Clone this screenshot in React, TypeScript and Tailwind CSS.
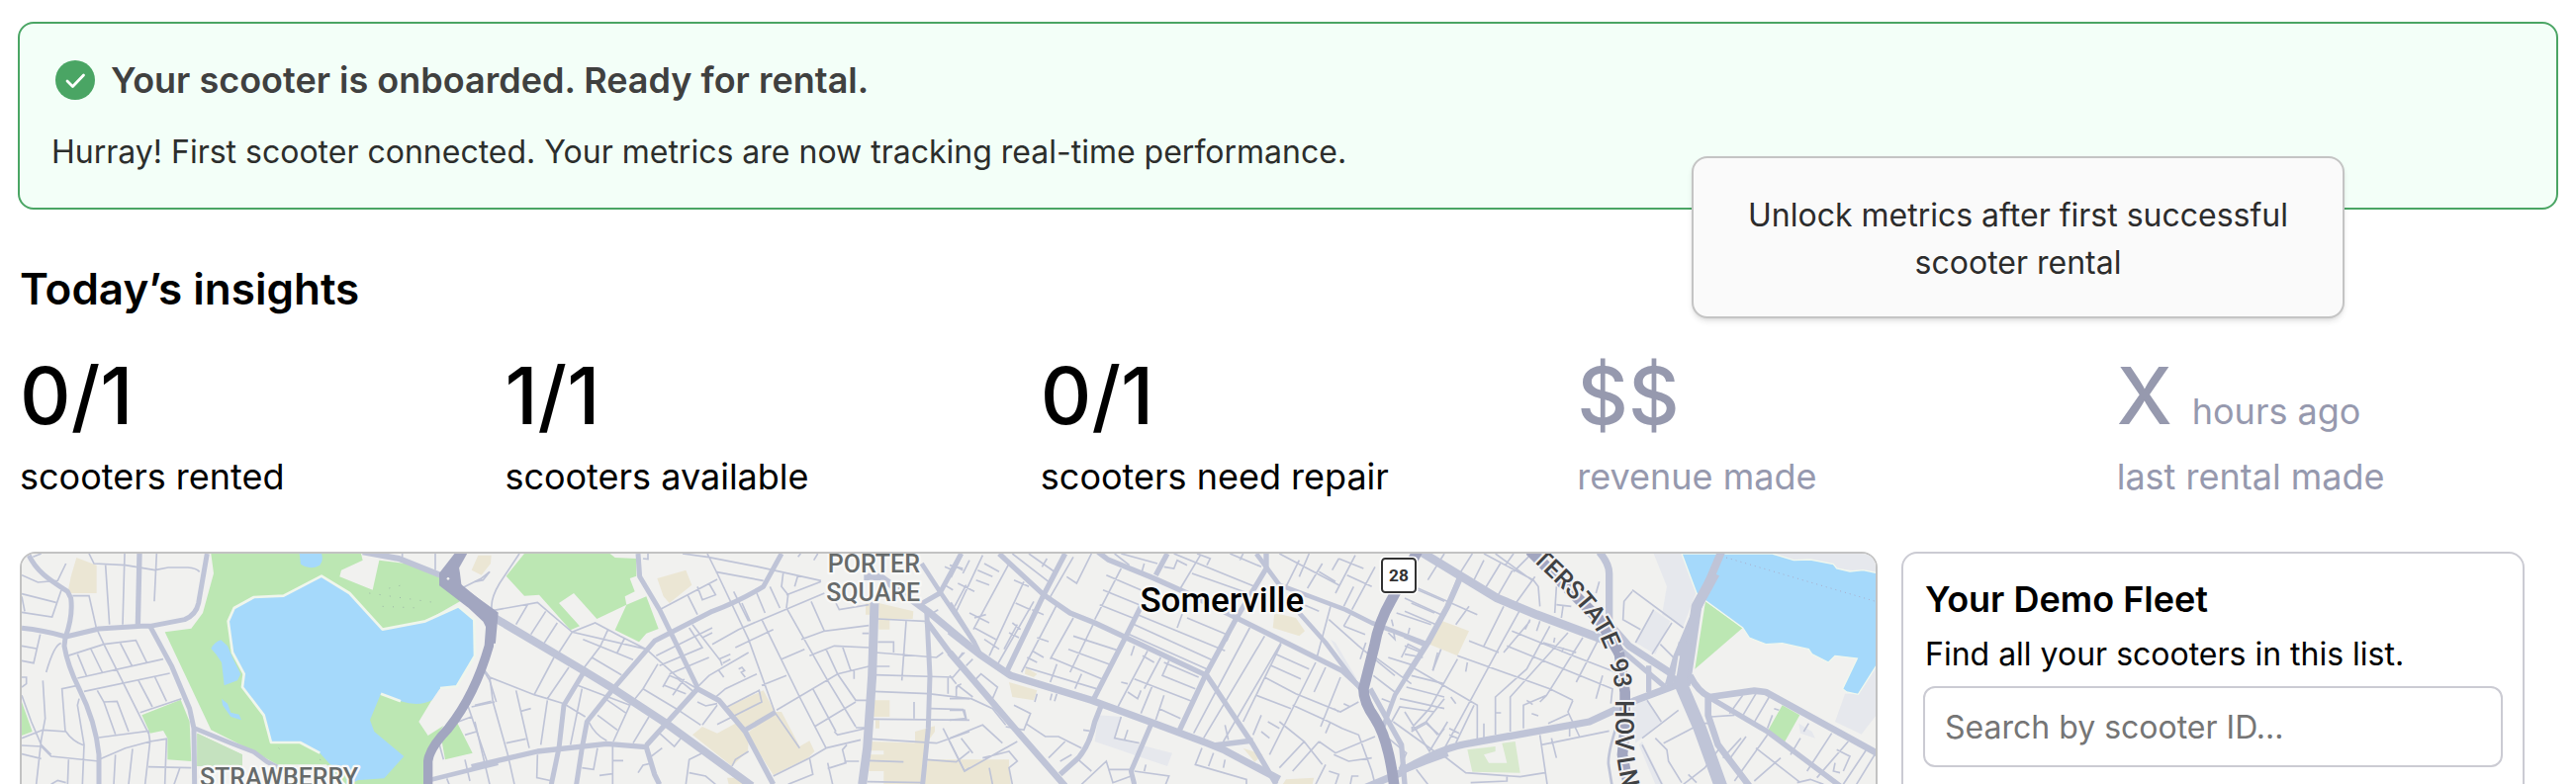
import React from 'react';

interface Metric {
    value: string;
    suffix?: string;
    label: string;
    locked?: boolean;
}

const metrics: Metric[] = [
    { value: '0/1', label: 'scooters rented' },
    { value: '1/1', label: 'scooters available' },
    { value: '0/1', label: 'scooters need repair' },
    { value: '$$', label: 'revenue made', locked: true },
    { value: 'X', suffix: 'hours ago', label: 'last rental made', locked: true },
];

interface Tile {
    x: number;
    park?: string;
    industrial?: string;
    school?: string;
    water?: string;
    streets: string;
    roads: [number, string][];
    highways?: [number, string][];
}

// The map is drawn as four neighbouring tiles, each with its own x origin.
const tiles: Tile[] = [
    {
        x: 0,
        park: 'M640 30H1095L1100 50L1035 80L1030 100L1130 140L1150 50L1230 60L1340 105L1395 175L1290 235L1160 260L1240 320L1385 433L1330 440L1270 540L1298 582L1345 552L1300 620L1285 730H1050L990 670H840L770 630L640 565L500 268L580 257L615 210L648 90Z M66 480L98 570L66 582Z M430 520L548 473L575 540L580 660L508 655V590L495 567L455 575Z M598 575L735 640V675H598Z M1340 600L1385 540L1433 635L1350 655Z',
        school: 'M232 42L293 65V150H205L215 100Z M1430 80L1450 35H1490L1488 60L1460 95Z',
        streets:
            'M66 95L115 117L175 112L200 60 M66 152L170 178 M270 30L285 60L380 65L470 80L510 72H570Q595 74 605 85 M320 65L332 245 M378 30L372 245 M475 30L468 175 M220 158H270L292 255L315 305L450 575 M186 140L158 222L66 208 M66 160L75 205 M205 340L315 305L412 293L445 360 M235 408L495 350 M255 448L515 393 M235 335L262 400 M275 318L310 390 M365 302L400 370 M420 415L462 495 M470 405L505 478 M425 512L550 470 M66 310L110 318 M66 355L102 362L122 275 M185 302Q165 305 140 390 M130 415L137 530L125 595L120 640L110 730 M66 460L95 540L125 610L155 640 M66 590L130 565L200 570Q220 600 255 612 M235 430L188 440L198 570 M240 470L235 490L255 610L250 730 M66 612L125 615L155 645L300 660 M66 638L125 652 M295 445L315 480L350 578 M315 480L355 478L390 570 M300 588L450 568L455 600 M300 655L380 620L455 600L505 592L500 730 M350 640L345 730 M402 622L390 730 M455 600L440 730 M450 677L580 680 M545 682L528 730 M208 655L205 730 M155 730L175 718L200 725 M66 405H80V425L66 435 M1400 135L1460 105L1485 85 M1470 390L1485 415L1505 480 M1430 495L1500 480 M1390 540L1430 525 M1410 580L1445 570 M1415 480L1480 670 M1330 600L1345 655 M1220 30V45 M1320 30V80 M1355 712L1362 730 M1410 655L1425 720 M100 40L125 30',
        roads: [
            [15, 'M85 30C110 85 150 110 205 145L215 165Q222 220 198 285L195 310Q205 370 240 440Q290 540 300 640V730'],
            [15, 'M66 256Q130 262 200 282L300 258L430 250H455L560 230Q595 215 602 180L628 30'],
            [16, 'M423 30L418 250'],
            [15, 'M455 250L520 370L575 500L588 560L590 730'],
            [14, 'M590 560L700 605L770 632L810 662L845 680'],
            [14, 'M1300 718L1510 665'],
            [18, 'M1100 25L1210 45L1360 105'],
        ],
        highways: [
            [30, 'M1405 20L1360 100'],
            [26, 'M1350 100L1490 215'],
            [28, 'M1490 215L1483 310Q1440 460 1360 560Q1302 620 1298 660V740'],
            [6, 'M1382 30L1335 90V125L1420 190L1468 235L1500 300L1508 210L1397 130L1392 90Z'],
        ],
    },
    {
        x: 1440,
        park: 'M150 30H410L425 42L490 45V98L470 105L485 145L455 160L460 185L370 228L300 150L255 180L318 250L290 262L195 155L150 158L95 98Z M460 185L520 160L557 258L520 272L498 298L425 262Z',
        school: 'M553 105L640 80L658 125L590 180L572 160Z M765 495L875 445L910 510L815 560Z M825 575L910 510H930L985 615L1015 598L1030 630L1010 650L905 702Z M660 580L690 555L735 575L800 540L830 600L828 628L780 675Z M1225 180L1330 205L1328 228H1258V260H1225Z M1185 180H1200V215H1185Z M1210 475H1258V525H1205Z M1195 600L1370 605L1358 730H1240V690H1195L1200 640H1240V628H1195Z M1375 655H1620V730H1358Z M1335 570L1395 553V570L1370 605H1335Z M765 710H800L830 730H770Z M1215 535H1227V560H1215Z',
        streets:
            'M0 115L25 110L45 85 M135 30L75 120Q45 170 52 203L190 178L295 268L520 320 M520 320L615 405L675 440 M160 185L125 245 M215 205L170 275 M250 240L208 305 M295 268L255 330 M295 268L365 240L440 280L520 320 M403 262L380 312L328 380 M328 290L480 352 M355 345L445 398 M455 285L432 330 M240 345L180 458L45 405L30 385 M285 375L220 470 M180 458L270 485L335 525 M45 405L55 480L100 640L120 730 M125 445L165 620 M0 490L50 478 M140 508L170 500 M0 540L45 730 M95 605L155 592 M220 475L200 610 M325 440L290 610 M312 430L470 490 M395 470L460 515 M372 520L432 565 M345 540Q365 580 400 598 M420 600L470 490L510 440L555 365 M528 525L480 605 M510 440L610 500L685 550 M570 435L590 400L615 410L665 450 M600 460L635 410 M575 430L640 455 M560 575L605 615L625 590 M190 640L188 710L235 720 M372 620L360 685L325 680 M418 615V730 M418 658H450 M378 703L418 698 M495 695L510 672L540 665 M535 645L568 620 M830 630L790 655L780 675 M640 730L650 655L690 635 M650 695L700 705L730 730 M510 45L525 47V30 M630 30L705 40L860 70L1050 112 M705 30L735 90L830 290L910 512L985 620 M730 85L875 112 M735 108L645 155L560 200 M645 155L675 215 M675 130L690 170L730 155L710 120 M785 145L830 235 M810 180L835 235 M855 150L880 210 M895 130L925 195 M935 90L930 130L950 155L945 195 M980 95L970 130 M945 155L1050 115 M1060 150L870 230L800 260L720 305 M948 200L1070 415L1155 555 M870 230L985 465L1065 620 M1020 175L1060 265L1195 248 M990 290L1060 265 M1095 180L1105 200L1195 185 M1175 272H1195 M930 350L1000 320 M1015 340L1090 310L1195 315 M1065 320L1100 395 M1115 312L1140 385 M1195 372L1100 395L915 505 M1150 385V410 M1025 440L1095 570 M1100 395L1155 475H1190 M1030 555L1155 480 M1065 620L1170 595 M1090 570L1100 580L1195 558H1155 M905 705L1015 650L1065 620 M1015 650L1025 700L950 730 M1070 682L1125 665L1115 625L1128 610 M1070 665L1085 730 M1120 660H1165 M550 340L720 255 M560 370L690 315L650 255 M590 395L710 345 M660 245L745 355L750 370 M752 362L775 350 M790 315L905 260 M675 435L710 400L830 330 M740 385L755 405 M725 470L760 440L855 395 M735 548L870 480L862 445L765 495 M870 430L945 400 M690 550L735 490 M675 480L700 492L735 485 M740 350L775 335 M690 285L720 270 M800 380L810 375L818 385L808 390L820 405 M1222 228L1365 235 M1308 235L1295 415 M1222 298H1270V330 M1215 330L1400 345L1420 330 M1215 372H1258 M1212 398L1450 405L1480 370 M1210 448L1375 455L1500 470 M1435 405V455 M1460 465V435L1475 425 M1205 532L1500 535 M1332 480V530 M1380 500L1480 503L1490 535 M1200 592L1400 605L1500 570 M1195 658L1300 662 M1370 655L1460 662L1500 630 M1190 722L1360 725 M1420 560L1460 640L1485 690L1500 680 M1425 70L1450 80 M1460 70L1480 80 M1425 125L1450 140 M1405 200L1380 215 M1455 190L1490 125 M1480 330L1465 350 M980 40L988 30 M1028 50L1040 30',
        roads: [
            [24, 'M60 225L330 385L420 440L580 545L840 735'],
            [27, 'M1212 175L1205 400L1190 620L1175 730'],
            [15, 'M495 30L500 100L560 200L675 435'],
            [15, 'M930 30L875 130Q800 175 720 205L545 295L420 440L340 540L325 620L308 730'],
            [15, 'M330 390L270 490L255 620L232 730'],
            [16, 'M-10 677L190 630L400 607L520 617L545 700L560 730'],
            [16, 'M520 612L675 440L740 475L820 570L905 730'],
            [15, 'M820 565L910 512'],
            [22, 'M1180 100H1230L1380 210L1500 310'],
            [17, 'M1370 235L1440 330L1500 400'],
            [15, 'M1370 200L1380 400L1375 560L1358 730'],
            [15, 'M1340 190L1410 150L1475 30'],
            [14, 'M1355 60L1410 145L1515 300'],
        ],
    },
    {
        x: 2880,
        school: 'M985 210L1050 225L1077 265L1060 280L980 255Z M1495 235V320L1460 300Z M180 420L265 445L255 475L190 465Z M230 375L265 395L255 405L228 395Z M890 620L950 640L925 662Z M110 655L125 680L165 655L185 700V730H100Z M920 130L930 145H905Z M1020 715L1105 710L1100 730H1010Z',
        industrial: 'M450 520L520 525L500 590L675 635L660 675L440 600Z M1155 290L1170 300L1235 410L1225 415Z',
        streets:
            'M60 50L40 90 M100 35L20 205 M105 60L150 85 M85 80L130 100 M80 110L120 125 M25 120L75 145 M0 65L40 75 M180 60L72 260 M225 115L120 340 M255 175L140 375 M195 110L240 130 M200 180L245 200 M60 210L120 240 M75 255L140 290 M75 225L110 215 M105 290L150 320 M190 240L215 260 M180 270L210 285 M165 320L205 245 M190 30L300 115 M240 30L325 90 M295 45L280 70 M430 30L385 120L355 100 M375 40L300 170 M325 185L218 390 M375 225L305 350 M435 245L365 390 M250 200L285 215 M265 285L300 297 M250 325L285 345 M235 345L265 360 M230 375L445 440 M305 345L465 412 M325 365L305 420 M400 395L380 440 M375 280L515 325 M360 320L495 370 M520 75L440 230 M475 95L590 145 M465 140L575 185 M455 185L555 225 M570 215L835 325 M560 245L800 355 M545 275L790 385 M710 200L690 255 M720 225L840 275 M500 30L545 65 M520 30L630 60 M590 60L580 95 M650 70L680 75L690 50L720 65 M760 35L700 135 M680 30L925 130 M750 30L790 45L780 65 M850 30L945 70 M890 30L880 50 M735 90L905 150 M600 325L510 495 M560 310L550 340 M640 345L590 440 M665 355L645 400L745 440 M585 340L620 360 M650 360L755 405 M560 410L740 480 M520 420L540 425 M540 450L570 470L580 445 M615 430L580 515 M650 460L625 535 M635 500L700 530 M910 255L740 575 M955 280L770 590 M1005 300L830 600 M840 295L850 270 M975 370L1065 410 M990 335L1090 380 M955 405L1050 455 M930 460L1035 500 M1005 305L890 540 M1110 360L970 640 M1140 375L1105 450 M1185 405L1125 555 M1040 490L1150 540L1190 560L1240 580L1280 690L1290 730 M1050 455L1185 510L1240 480 M1155 540L1140 575 M1000 540L1075 600L1000 680 M1075 600L1130 670 M1120 600L1170 635L1290 585 M1165 640L1210 660L1280 650 M945 570L970 590 M965 540L1000 560 M1120 600L1040 690 M1140 670L1110 730 M1150 690L1180 700L1170 730 M1215 730L1220 705H1240 M1195 485L1215 495 M1165 500L1180 510 M0 470L65 470L130 500L170 550 M0 505L45 505L50 530L0 535 M0 590L100 550L160 605 M35 590L70 635 M45 690L205 600 M0 600L45 690 M100 650L180 630L205 660L180 680L190 730 M120 680L130 730 M20 440L25 430L70 465 M0 400L20 425 M80 410L95 395L145 435L130 470 M25 350L45 330 M50 370L70 350 M195 490L245 515L225 565L170 555 M230 545L290 585H330L400 620 M265 455L258 480 M310 455L305 475 M325 455L318 478 M350 600L300 650 M370 640L335 660 M390 655L430 690 M400 730L475 660L495 725L550 705 M480 685H550 M560 690L665 705L655 730 M520 525L500 590L575 605 M540 565L530 595 M765 620L745 670L900 715V730 M800 635L785 675 M835 655L830 680 M835 550L845 595 M595 670L590 690 M405 565L425 568 M945 520L920 580 M1060 50L1020 130 M1000 30L1180 125 M1090 30L1060 100 M1180 45L1160 80 M1230 35L1170 150 M1205 95L1280 130 M1130 60L1085 135 M1290 70L1220 200 M1225 130L1195 190 M1120 85L1170 115 M1155 190L1115 340 M1150 230L1240 310L1350 400 M1040 170L1120 205 M1195 250L1215 215 M1195 250L1260 275 M1245 350L1262 300 M1255 75L1180 45 M1400 180L1470 210 M1355 210L1460 245 M1420 140L1500 175 M1370 345L1390 305L1430 325 M1330 345L1410 370 M1285 340L1400 425 M1285 400L1350 450 M1400 400L1500 425 M1385 435L1500 465 M1365 470L1500 500 M1480 330L1465 385 M1340 540L1365 495L1470 510 M1345 540L1470 630 M1400 570L1445 545L1485 580L1500 560 M1445 540L1500 470 M1330 590L1385 635L1365 680 M1310 470L1335 480 M1340 230L1345 250 M1395 255L1390 275 M1330 270L1350 290L1345 260',
        roads: [
            [14, 'M35 30L0 100'],
            [22, 'M0 265L90 335L185 400L430 475L620 545L780 605L830 625L1000 715'],
            [20, 'M0 330L210 575L350 735'],
            [14, 'M0 180L75 300L90 330'],
            [16, 'M150 30L285 155L365 210L440 240L780 400L900 580L920 610L990 730'],
            [16, 'M350 30L285 155L172 390'],
            [16, 'M660 30L625 95M580 190L530 290L435 475'],
            [16, 'M450 25L480 48L620 105L720 150L860 220L1190 385L1250 440'],
            [16, 'M960 30L960 75L870 225L775 400L695 570'],
            [14, 'M930 30L1000 125L1200 200L1280 240L1450 305'],
            [14, 'M1060 210L1140 300L1245 440'],
            [16, 'M460 490L440 540Q425 610 390 650L335 700'],
            [15, 'M612 545L550 690L560 730'],
            [17, 'M800 612L920 597'],
            [14, 'M1550 90L1515 180L1450 300L1350 460L1315 555'],
            [22, 'M1365 690L1440 660L1510 635M1260 740L1380 690'],
            [16, 'M1275 440L1370 610L1380 730'],
        ],
        highways: [[32, 'M1420 20L1340 170Q1300 240 1288 310L1255 440Q1255 480 1290 530Q1330 590 1348 735']],
    },
    {
        x: 4260,
        park: 'M912 175L1025 255L880 380Z M1145 490L1198 520L1150 605L1098 573Z',
        industrial: 'M1115 30H1430V90L1310 75L1180 50Z M755 30H840L885 145L845 250L780 215L795 130Z M1430 370V520L1385 578L1305 540L1335 455H1375Z M755 200L805 235L760 335L700 300Z M690 490L735 475L778 540L700 605Z M1195 545L1235 570L1245 590L1200 575Z M710 610L720 600L785 730H760Z',
        school: 'M115 235L195 265L160 340L75 305Z',
        water: 'M840 30H1115L1180 50L1230 48L1300 62L1310 75L1350 84L1390 80L1430 88V370L1375 457L1340 450L1328 440L1372 348L1305 340L1285 360L1235 335L1225 320L1145 302L1095 305L1045 285L1025 255L915 175L885 150Z',
        streets:
            'M120 30L70 110 M205 30L170 85 M240 50L205 120 M290 60L235 150 M330 75L275 170 M395 100L330 190 M240 30L390 110L405 130L410 190 M275 30L385 110 M330 30L305 65 M380 35L330 85 M40 135L220 215 M0 165L110 215 M0 205L95 245 M135 175L120 220 M195 190L155 245 M0 310L50 330 M0 335L55 345 M110 320L85 385 M15 370L220 490V595 M160 340L440 440L510 475 M195 295L285 330 M190 360L185 388 M300 190L240 310 M350 200L300 290L110 640 M380 230L365 260 M410 235L400 265 M325 265L510 340L640 390 M440 250L370 380L275 465V580 M380 235L300 330 M495 270L320 465V570 M540 285L430 460L360 490V560 M430 460L410 480 M585 295L520 420 M600 400L580 470 M310 310L630 440L625 485 M420 300L520 330 M455 285L452 300 M480 315L478 330 M20 560L75 500L160 350 M0 510L75 630L130 540 M20 565L65 540L100 580 M210 490L155 605 M240 545V590 M135 560L165 575 M135 580L160 590 M140 465L155 485 M275 513H292 M370 475L388 488 M385 515L405 522 M510 475L495 510L530 585 M435 545L500 515 M410 580L432 730 M415 610L620 568 M445 590L460 650 M500 555V585 M120 645L185 695L350 707L425 695 M35 685L70 730 M200 725L310 720V705 M460 130L455 210 M460 185L505 190 M480 190L475 225 M590 115L580 150 M690 145L665 175L662 230L715 260 M690 140L845 255 M755 200L700 300 M810 240L750 335 M775 305L820 350 M735 475L778 540 M720 590L830 505 M760 590L795 625L800 660L840 725 M785 605L900 545 M720 610L780 730 M895 545H920 M930 525L1000 520 M1025 460L985 515 M1065 455L1020 530 M1105 465L1055 550 M1120 500L1135 505 M1115 520L1100 560 M1035 585L980 660 M1100 580L1000 720 M1065 620L1200 725 M1020 590L965 650 M1200 590L1170 640 M1295 575L1220 690 M1345 600L1250 710 M1310 625L1350 645L1330 690 M1305 665L1300 690L1320 695 M1400 625L1330 730 M1425 640L1370 730 M1225 545L1210 570 M845 730L910 680L955 620 M860 700L885 725 M1060 720L1140 650 M1190 725L1230 715L1270 730',
        roads: [
            [26, 'M50 25L280 165L400 215L600 290'],
            [18, 'M170 100L130 190L70 300L0 410'],
            [14, 'M0 280L70 310'],
            [22, 'M590 25Q620 60 620 90V230'],
            [22, 'M610 230L680 310L810 395'],
            [16, 'M660 325L790 435'],
            [16, 'M740 370V450'],
            [22, 'M-10 690Q120 615 200 605L560 540L700 475L820 430'],
            [24, 'M960 25L890 190L825 345L800 430'],
            [32, 'M940 90L885 190L865 330L850 430'],
            [40, 'M850 300L835 420L895 560L960 740'],
            [20, 'M865 400Q890 450 925 465L1060 446L1095 450L1440 640'],
            [16, 'M925 467L1100 570L1320 735'],
            [20, 'M920 465V520L950 610L1045 735'],
            [8, 'M640 560Q615 640 618 670L628 730'],
        ],
        highways: [
            [34, 'M380 20L590 230L650 330'],
            [32, 'M650 330L668 450V560L660 640L680 740'],
        ],
    },
];

const lake =
    'M975 98L1060 150L1160 260L1290 235L1390 190L1438 230L1440 340L1385 433L1335 438L1310 475Q1270 495 1215 478L1155 455L1122 535L1135 570L1225 645L1165 712L1080 718L1050 700L1000 668L970 635L910 603H822L800 520L735 435L740 395L705 330L692 235L710 195L770 162L860 158Z';

const shore =
    'M1155 455L1215 478 M1335 438L1385 433L1440 340L1438 230L1390 190L1290 235L1160 260L1060 150L975 98L860 158L770 162L710 195L692 235L705 330L740 395L735 435L800 520L822 603L910 603L970 635';

const ponds =
    'M640 318Q650 298 670 292L690 310L705 345L730 395L720 415L680 430L672 360L655 335Z M672 470L690 485L700 512L725 518L732 535L700 525L675 490Z M908 30H975Q982 50 970 65Q940 82 912 62Z M1050 700L1085 718L1060 730Z';

const CityMap: React.FC = () => (
    <svg
        className="block h-full w-full font-[Roboto,sans-serif]"
        viewBox="66 30 5622 1794"
        preserveAspectRatio="xMinYMin slice"
        fill="none"
        role="img"
        aria-label="Map of your scooters"
    >
        <rect x="66" y="30" width="5622" height="1794" fill="#f1f1ef" />
        {tiles.map((tile) => (
            <g key={tile.x} transform={`translate(${tile.x} 0)`}>
                <path d={tile.industrial} fill="#e6e8ed" />
                <path d={tile.school} fill="#ebe6d4" />
                <path d={tile.park} fill="#bce7b3" />
                <path d={tile.water} fill="#a5d9fb" stroke="#f1f8ee" strokeWidth="4" />
            </g>
        ))}

        <path d={lake} fill="#a5d9fb" />
        <path d={ponds} fill="#a5d9fb" />
        <path d={shore} stroke="#f0f6ec" strokeWidth="8" strokeLinejoin="round" />
        <path d="M598 575L735 640V675H598Z" fill="#c5e2bf" />
        <path d="M1120 150L1330 180M1160 190L1270 195M1180 135L1240 120M845 620L860 635M970 655L985 660" stroke="#9bb5a5" strokeWidth="3" strokeDasharray="3 28" />
        <path d="M4450 625L4535 615V630L4500 640L4515 665H4570L4555 605L4595 600L4610 695L4465 692Z" fill="#d8e9cd" />
        <path d="M5235 42L5688 175" stroke="#a9abc8" strokeWidth="3" strokeDasharray="3 12" />

        {tiles.map((tile) => (
            <path key={tile.x} transform={`translate(${tile.x} 0)`} d={tile.streets} stroke="#bfc4d7" strokeWidth="5" />
        ))}
        {tiles.map((tile) => (
            <g key={tile.x} transform={`translate(${tile.x} 0)`} stroke="#bfc4d7" strokeLinejoin="round">
                {tile.roads.map(([width, d]) => (
                    <path key={d} d={d} strokeWidth={width} />
                ))}
            </g>
        ))}
        {tiles.map((tile) => (
            <g key={tile.x} transform={`translate(${tile.x} 0)`} stroke="#a2a6c0" strokeLinejoin="round">
                {tile.highways?.map(([width, d]) => (
                    <path key={d} d={d} strokeWidth={width} fill={d.endsWith('Z') ? '#a2a6c0' : 'none'} />
                ))}
            </g>
        ))}
        <circle cx="1359" cy="106" r="4" fill="#f1f1ef" />
        <path d="M5082 400L5092 340" stroke="#f1f1ef" strokeWidth="5" />

        <g stroke="#f8f8f7" strokeWidth="14" strokeLinejoin="round" paintOrder="stroke" fontWeight="500" textAnchor="middle">
            <g fill="#666a6a" fontSize="75">
                <text x="846" y="735">STRAWBERRY</text>
                <text x="2650" y="87">PORTER</text>
                <text x="2648" y="173">SQUARE</text>
            </g>
            <text x="3706" y="206" fontSize="105" fill="#000">Somerville</text>
        </g>

        <path id="interstate" d="M4635 38L4740 140Q4810 205 4850 280Q4900 385 4900 480V610Q4902 660 4925 760" />
        <text fontSize="75" fontWeight="500" fill="#3f4143" stroke="#f1f1f3" strokeWidth="12" strokeLinejoin="round" paintOrder="stroke">
            <textPath href="#interstate" startOffset="14">TERSTATE</textPath>
            <textPath href="#interstate" startOffset="407">93</textPath>
            <textPath href="#interstate" startOffset="528">HOV</textPath>
            <textPath href="#interstate" startOffset="704">LN</textPath>
        </text>

        <rect x="4184" y="38" width="116" height="116" rx="14" fill="#fff" />
        <rect x="4191" y="45" width="102" height="102" rx="10" fill="#fff" stroke="#323232" strokeWidth="6" />
        <text x="4242" y="115" fontSize="52" fontWeight="700" fill="#323232" textAnchor="middle">28</text>
    </svg>
);

const MetricItem: React.FC<{ metric: Metric }> = ({ metric }) => (
    <li className={metric.locked ? 'text-[#9699ae]' : 'text-black'}>
        <p className="flex items-baseline gap-5 text-[80px] leading-[80px] font-medium">
            {metric.value}
            {metric.suffix && <span className="text-4xl font-normal">{metric.suffix}</span>}
        </p>
        <p className="mt-[18px] text-4xl leading-[48px]">{metric.label}</p>
    </li>
);

const App: React.FC = () => (
    <main className="flex h-screen flex-col overflow-hidden bg-white px-[18px] pt-[22px] font-[Inter,sans-serif] text-black">
        <section className="rounded-2xl border-2 border-[#4aa564] bg-[#f3fff8] px-8 py-8">
            <div className="flex items-center gap-4 pl-1">
                <svg className="size-10" viewBox="0 0 40 40" fill="none" aria-hidden="true">
                    <circle cx="20" cy="20" r="20" fill="#4aa564" />
                    <path d="M12 21L17.500 26.500L28.500 15" stroke="#fff" strokeWidth="2.800" strokeLinecap="round" strokeLinejoin="round" />
                </svg>
                <h2 className="text-4xl leading-[50px] font-semibold text-[#3f403f]">Your scooter is onboarded. Ready for rental.</h2>
            </div>
            <p className="mt-6 text-[32px] leading-[48px] text-[#2c2e2c]">
                Hurray! First scooter connected. Your metrics are now tracking real-time performance.
            </p>
        </section>

        <section className="relative mt-[52px] pr-8 pl-0.5">
            <h1 className="text-[44px] leading-[56px] font-semibold">Today’s insights</h1>
            <ul className="mt-10 grid grid-cols-[490fr_541fr_542fr_545fr_414fr]">
                {metrics.map((metric) => (
                    <MetricItem key={metric.label} metric={metric} />
                ))}
            </ul>
            <div
                role="tooltip"
                className="absolute right-[216px] bottom-full -mb-[58px] w-[660px] rounded-2xl border-2 border-[#c4c4c4] bg-[#fafafa] px-10 pt-[34px] pb-[30px] text-center text-[32px] leading-[48px] text-[#2c2c2c] shadow-md"
            >
                Unlock metrics after first successful scooter rental
            </div>
        </section>

        <section className="mt-[52px] flex shrink-0 gap-6 pr-[34px] pl-0.5">
            <div className="h-[602px] min-w-0 flex-1 overflow-hidden rounded-2xl border-2 border-[#c2c2c2]">
                <CityMap />
            </div>
            <aside className="w-[630px] rounded-2xl border-2 border-[#cbcbd3] px-5 pt-[22px]">
                <div className="px-0.5">
                    <h2 className="text-4xl leading-[48px] font-semibold">Your Demo Fleet</h2>
                    <p className="mt-2 text-[32px] leading-[48px]">Find all your scooters in this list.</p>
                </div>
                <input
                    type="search"
                    aria-label="Search by scooter ID"
                    placeholder="Search by scooter ID..."
                    className="mt-2 h-[82px] w-full rounded-xl border-2 border-[#cbcbd3] px-5 text-[32px] placeholder:text-[#757575]"
                />
            </aside>
        </section>
    </main>
);

export default App;
